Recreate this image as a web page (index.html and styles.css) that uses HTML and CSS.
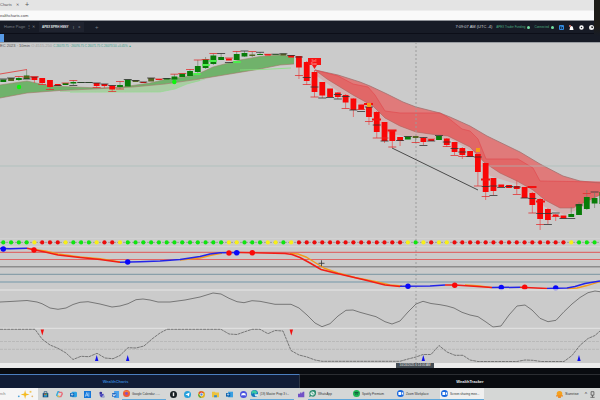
FILE: index.html
```html
<!DOCTYPE html>
<html lang="en">
<head>
    <meta charset="UTF-8">
    <meta name="viewport" content="width=device-width, initial-scale=1.0">
    <title>WealthCharts</title>
    <link rel="stylesheet" href="styles.css">
</head>
<body>
    <div class="browser-tabs">
        <span class="browser-title">Charts</span>
        <button type="button" class="browser-close" aria-label="Close tab">✕</button>
        <button type="button" class="browser-new" aria-label="New tab">+</button>
    </div>
    <div class="address-bar">
        <input type="text" aria-label="Address" value="ealthcharts.com">
    </div>

    <header class="nav">
        <button type="button" class="page-tab">Home Page <span>⋮</span> <span>✕</span></button>
        <button type="button" class="page-tab active">APEX EPRH HSNY <span>⋮</span> <span>✕</span></button>
        <button type="button" class="add-tab" aria-label="Add page">+</button>
        <div class="status">
            <span class="clock">7:09:07 AM (UTC -4)</span>
            <span class="online">APEX Trader Funding <i></i></span>
            <span class="online">Connected <i></i></span>
            <button type="button" class="nav-icon" aria-label="Layout">
                <svg viewBox="0 0 10 10"><rect width="10" height="10" rx="2" fill="#3189df"/><path d="M2 3h3v5H2zM6 4h2v4H6z" fill="#163252"/></svg>
            </button>
            <button type="button" class="nav-icon" aria-label="Alerts">
                <svg viewBox="0 0 10 10"><path d="M1 10L2 5Q2 2 5 2T8 5L9 10z" fill="#fff"/><circle cx="2" cy="2" r="2" fill="#e57c72"/></svg>
            </button>
            <button type="button" class="nav-icon" aria-label="Settings">
                <svg viewBox="0 0 10 10"><circle cx="5" cy="5" r="3" fill="none" stroke="#fff" stroke-width="3"/></svg>
            </button>
            <button type="button" class="nav-icon" aria-label="Account">
                <svg viewBox="0 0 10 10"><circle cx="5" cy="5" r="5" fill="#eee"/><path d="M4 3h4v3H5z" fill="#333"/></svg>
            </button>
        </div>
    </header>
    <div class="toolbar"><button type="button" aria-label="Menu"></button></div>

    <main class="chart">
        <div class="legend">EC 2023 · 10min <span>O 4515.250</span> <b>C 26073.75 · 26076.75 C 26071.75 C 26073.50 +0.45% ▲</b></div>
        <svg id="chart" viewBox="0 42 600 321" role="img" aria-label="Price chart"></svg>
    </main>
    <div class="time-axis"><span>10/24/2025 6:14:00 AM</span></div>

    <nav class="views">
        <button type="button" class="active">WealthCharts</button>
        <button type="button">WealthTracker</button>
    </nav>

    <footer class="taskbar">
        <div class="search"><span>rch</span>
            <svg viewBox="0 0 20 10"><path d="M9 0l1 4 4 1-4 1-1 4-1-4-4-1 4-1z" fill="#f4ba20"/><circle cx="2" cy="7" r="1" fill="#4ca0d8"/><path d="M14 1h2v2h-2z" fill="#f2c65a"/><circle cx="17" cy="7" r="1" fill="#e6b770"/></svg>
        </div>
        <button type="button" class="app" aria-label="Store"><svg viewBox="0 0 10 10"><path d="M1 3h8v6H1z" fill="#18507c"/><path d="M3 3V1h4v2" fill="none" stroke="#18507c"/><path d="M3 4h2v2H3z" fill="#e55e36"/><path d="M5 4h2v2H5z" fill="#73b640"/><path d="M3 6h4v2H3z" fill="#36aae4"/></svg></button>
        <button type="button" class="app" aria-label="Copilot"><svg viewBox="0 0 10 10"><path d="M5 1H3L1 6l2 2h2" fill="none" stroke="#33aadd" stroke-width="2"/><path d="M4 2h4l1 2-2 4H4" fill="none" stroke="#e76f7c" stroke-width="2"/><path d="M2 7l3 1" stroke="#edbd3c" stroke-width="2"/></svg></button>
        <button type="button" class="app" aria-label="Mail"><svg viewBox="0 0 10 10"><rect x="2" y="1" width="8" height="8" rx="2" fill="#2aa2e5"/><rect y="3" width="6" height="5" fill="#1264b6"/><circle cx="3" cy="5" r="1" fill="none" stroke="#fff"/></svg></button>
        <button type="button" class="app" aria-label="Tasks"><svg viewBox="0 0 10 10"><rect width="10" height="10" fill="#1476d9"/><path d="M2 8l2-6 2 6M2 6h4M7 2v6" fill="none" stroke="#b9dcfc"/></svg></button>
        <button type="button" class="app" aria-label="Teams"><svg viewBox="0 0 10 10"><circle cx="4" cy="3" r="2" fill="#3934a0"/><path d="M2 5l6-1v5H4z" fill="#4845bd"/><circle cx="8" cy="8" r="2" fill="#a1a7cc"/></svg></button>
        <button type="button" class="app" aria-label="Word"><svg viewBox="0 0 10 10"><path d="M3 0h7v10H3z" fill="#4da2eb"/><path d="M0 3h6v5H0z" fill="#155dbb"/><path d="M1 4l1 3 1-2 1 2 1-3" fill="none" stroke="#fff"/></svg></button>
        <button type="button" class="window"><svg viewBox="0 0 10 10"><circle cx="5" cy="5" r="5" fill="#f05a34"/><path d="M1 1q2 2 5 1t3 4L8 3z" fill="#ffc036"/><circle cx="5" cy="5" r="2" fill="#8653c4"/></svg><span>Google Calendar - ...</span></button>
        <button type="button" class="app" aria-label="Music"><svg viewBox="0 0 10 10"><circle cx="5" cy="5" r="5" fill="#182023"/><path d="M4 2h2v4L5 8 4 6z" fill="#eee"/></svg></button>
        <button type="button" class="app" aria-label="Telegram"><svg viewBox="0 0 10 10"><circle cx="5" cy="5" r="5" fill="#25a0dc"/><path d="M2 5l6-3-1 6-2-2z" fill="#fff"/></svg></button>
        <button type="button" class="app" aria-label="Chrome"><svg viewBox="0 0 10 10"><circle cx="5" cy="5" r="5" fill="#e1b322"/><path d="M1 2q4-4 8 1H5L3 6z" fill="#e44939"/><path d="M0 4l3 3 2 3Q0 9 0 4" fill="#35a851"/><circle cx="5" cy="5" r="2" fill="#4387ed" stroke="#fff"/></svg></button>
        <button type="button" class="app" aria-label="Files"><svg viewBox="0 0 10 10"><path d="M0 1h4l1 1h5v7H0z" fill="#edc23c"/><path d="M3 6h4v3H3z" fill="#378acb"/></svg></button>
        <button type="button" class="app" aria-label="Outlook"><svg viewBox="0 0 10 10"><path d="M3 1h7v8H3z" fill="#39a0e2"/><path d="M0 3h6v5H0z" fill="#075eab"/><circle cx="3" cy="5" r="1" fill="none" stroke="#fff"/></svg></button>
        <button type="button" class="app" aria-label="Discord"><svg viewBox="0 0 10 10"><circle cx="5" cy="5" r="5" fill="#4951df"/><path d="M2 4q3-2 6 0v3L7 6H3L2 7z" fill="#fff"/></svg></button>
        <button type="button" class="window"><svg viewBox="0 0 10 10"><circle cx="5" cy="5" r="5" fill="#1676bd"/><path d="M1 2q6-4 8 2L6 6 4 4 1 6z" fill="#3ccba3"/><path d="M5 6h5v3H6z" fill="#d9eff5"/></svg><span>(19) Master Prop 3 t...</span></button>
        <button type="button" class="app" aria-label="Community"><svg viewBox="0 0 10 10"><path d="M0 4h3V2h2v2l2-3h2v8H0z" fill="#7151c6"/></svg></button>
        <button type="button" class="window"><svg viewBox="0 0 10 10"><path d="M0 10l1-3Q-1 1 5 0t5 5-7 4z" fill="#2b8b6e"/><circle cx="5" cy="5" r="3" fill="#e2f2ec"/><path d="M4 3q0 3 3 3" fill="none" stroke="#2b8b6e"/></svg><span>WhatsApp</span></button>
        <button type="button" class="window"><svg viewBox="0 0 10 10"><circle cx="5" cy="5" r="5" fill="#1eb653"/><path d="M2 4q3-1 6 0M3 6q2-1 4 0" fill="none" stroke="#123"/></svg><span>Spotify Premium</span></button>
        <button type="button" class="window"><svg viewBox="0 0 10 10"><circle cx="5" cy="5" r="5" fill="#1767de"/><path d="M2 3h4v4H2zM7 4l2-1v4L7 6z" fill="#fff"/></svg><span>Zoom Workplace</span></button>
        <button type="button" class="window current"><svg viewBox="0 0 10 10"><circle cx="5" cy="5" r="5" fill="#1767de"/><path d="M2 3h4v4H2zM7 4l2-1v4L7 6z" fill="#fff"/></svg><span>Screen sharing mee...</span></button>
        <div class="tray">
            <svg viewBox="0 0 10 10"><circle cx="5" cy="4" r="4" fill="#f6a11c"/><path d="M0 6h10v2H0zM3 8h4v2H3z" fill="#ed8c26"/></svg>
            <span>Sunrise</span>
            <span class="caret">^</span>
            <svg class="mic" viewBox="0 0 10 10"><path d="M3 1h4v5H3zM5 6v3M2 9h6" fill="none" stroke="#444"/></svg>
        </div>
    </footer>
    <div class="bezel"></div>

    <script src="script.js"></script>
</body>
</html>
```

FILE: styles.css
```css
* {
    box-sizing: border-box;
}

body {
    margin: 0;
    min-height: 100vh;
    position: relative;
    display: flex;
    flex-direction: column;
    overflow-x: hidden;
    background: #090b10;
    font-family: "Liberation Sans", Arial, sans-serif;
    font-size: 4px;
    line-height: 6px;
}

button,
input {
    border: 0;
    padding: 0;
    background: none;
    font: inherit;
    color: inherit;
}

.browser-tabs {
    display: flex;
    align-items: center;
    gap: 6px;
    height: 10px;
    background: #e4e4e4;
    color: #555;
}

.browser-title {
    width: 10px;
    white-space: nowrap;
}

.browser-new {
    font-size: 7px;
}

.address-bar {
    display: flex;
    height: 11px;
    background: #fafafa;
    border-top: 1px solid #eee;
    border-bottom: 1px solid #909399;
}

.address-bar input {
    width: 100%;
    font-size: 4px;
    color: #444;
}

.nav {
    display: flex;
    align-items: center;
    height: 13px;
    padding-left: 4px;
    background: #171b26;
    border-bottom: 1px solid #0c0e18;
    color: #777c84;
}

.page-tab {
    display: flex;
    justify-content: space-between;
    align-items: center;
    width: 31px;
    height: 10px;
    margin-right: 4px;
    white-space: nowrap;
}

.page-tab.active {
    width: 45px;
    padding: 0 3px;
    background: #1f232f;
    font-size: 3px;
    font-weight: bold;
    color: #e4e7e9;
}

.page-tab span {
    color: #858990;
}

.add-tab {
    margin-left: 7px;
    font-size: 6px;
}

.status {
    display: flex;
    align-items: center;
    gap: 4px;
    margin-left: auto;
    padding-right: 6px;
    white-space: nowrap;
}

.clock {
    color: #d4d7dd;
    font-size: 4px;
}

.online {
    display: flex;
    align-items: center;
    gap: 2px;
    color: #4cac80;
    font-size: 3px;
}

.online i {
    width: 3px;
    height: 3px;
    border-radius: 50%;
    background: #73dfa2;
}

.nav-icon {
    width: 5px;
    height: 5px;
    margin-left: 1px;
}

.nav-icon svg {
    display: block;
}

.toolbar {
    display: flex;
    height: 8px;
    background: #171b26;
}

.toolbar button {
    width: 4px;
    background: #5799e5;
}

.chart {
    position: relative;
    background: #cbcbcb;
    border-top: 1px solid #999ca1;
}

.chart svg {
    display: block;
    width: 100%;
    margin-top: -1px;
}

.legend {
    position: absolute;
    left: 0;
    top: 0;
    font-size: 4px;
    line-height: 5px;
    color: #555;
    white-space: nowrap;
}

.legend span {
    color: #999;
}

.legend b {
    font-weight: normal;
    font-size: 3px;
    color: #379e8d;
}

.time-axis {
    position: relative;
    height: 5px;
    background: #ececec;
}

.time-axis span {
    position: absolute;
    left: 66%;
    top: 0;
    width: 38px;
    background: #454d54;
    color: #eee;
    font-size: 3px;
    line-height: 5px;
    text-align: center;
    white-space: nowrap;
}

.views {
    display: grid;
    grid-template-columns: 1fr 1fr;
    flex: 1;
    padding-top: 6px;
    background: #090b10;
}

.views button {
    border-top: 1px solid #2b2d32;
    color: #e7e9ec;
    font-weight: bold;
    padding-left: 40px;
}

.views .active {
    border-top: 1px solid #4b7ebf;
    border-right: 1px solid #2d3542;
    background: #111c35;
    color: #347ece;
    padding-left: 0;
    padding-right: 68px;
}

.taskbar {
    display: flex;
    align-items: center;
    height: 12px;
    background: #d5d7d6;
    color: #333;
    white-space: nowrap;
}

.taskbar svg {
    width: 7px;
    height: 7px;
    flex: none;
}

.search {
    display: flex;
    align-items: center;
    justify-content: space-between;
    width: 38px;
    height: 12px;
    padding-right: 3px;
    background: #f5f5f5;
    color: #777;
}

.taskbar .search svg {
    width: 18px;
    height: 9px;
}

.app {
    display: flex;
    align-items: center;
    justify-content: center;
    width: 14px;
    height: 12px;
}

.window {
    display: flex;
    align-items: center;
    gap: 2px;
    width: 44px;
    height: 12px;
    padding: 0 1px;
    border-bottom: 1px solid #60a8db;
}

.window span {
    font-size: 3px;
}

.window.current {
    background: #efefef;
}

.tray {
    display: flex;
    align-items: center;
    gap: 2px;
    margin-left: auto;
    padding-right: 4px;
}

.tray .caret {
    margin-left: 4px;
    font-size: 5px;
}

.bezel {
    position: absolute;
    top: 0;
    right: 0;
    width: 6px;
    height: 36px;
    background: linear-gradient(#1d1c18 70%, #171b26);
}

.flag {
    font-size: 3px;
    fill: #ffb0a8;
}
```

FILE: script.js
```js
const chart = document.getElementById('chart');
const STEP = 7.78;
const barX = i => 3.3 + i * STEP;

function draw(tag, attrs, text) {
    const el = document.createElementNS('http://www.w3.org/2000/svg', tag);
    for (const key in attrs) {
        el.setAttribute(key, attrs[key]);
    }
    if (text) el.textContent = text;
    chart.appendChild(el);
}

function line(points, stroke, width = 1, extra = {}) {
    draw('polyline', { points, stroke, fill: 'none', 'stroke-width': width, ...extra });
}

function area(points, fill, opacity = 1) {
    draw('polygon', { points, fill, opacity });
}

function level(y, stroke, width = 1, extra = {}) {
    line(`0,${y} 600,${y}`, stroke, width, extra);
}

// Trend clouds
const greenTop = '0,85 27,81 50,86 100,88 122,87 150,83 167,79 185,77 200,73 213,67 240,60 260,56.5 280,55 294,57';
const greenBottom = '294,64 280,65 260,69 230,74 200,79 165,84 133,87 93,89 60,90.5 27,93 0,98';
area('60,91 93,89 133,87 165,84 200,79 200,81 187,84 175,89 160,92 60,92', '#a9cda3');
area(`${greenTop} ${greenBottom}`, '#70b26b');
line(greenTop, '#98856a', 0.6);
line(greenBottom, '#a57667', 0.6);
line('70,92.3 160,92 175,89 187,84 205,79', '#8fdd8b', 0.6);
line('240,70 262,69.5 291,68', '#85e37f', 0.8);

const redTop = '315,70 338,75 360,82 370,86 387,94 403,102 416,107 440,113 450,117 470,126 487,136 520,152 540,164 563,176 580,181 600,183';
const redBottom = '600,195 585,202 573,208 560,208 545,200 533,190 517,181 500,173 485,163 470,147 448,136 430,134 416,132 400,126 385,118 373,106 353,95 340,87 327,79 315,70';
const redMid = '315,70 338,76 353,84 368,87 375,95 385,111 400,113 440,113 447,117 462,129 470,131 478,139 486,159 518,159 533,168 540,181 600,182';
area(`${redBottom} 317,76 340,93 370,110 385,133 410,137 450,139 478,155 490,176 520,185 545,207 565,215 585,206`, '#d5aaaa', 0.8);
area(`${redTop} ${redBottom}`, '#e07a7a');
area(`${redMid} ${redBottom}`, '#e16767');
line(redTop, '#a2706e', 0.8);
line(redBottom, '#ad6662', 0.6);
line(redMid, '#e14c50', 0.7);

// Crosshair
level(166, '#a7bdb9', 0.7);
line('416,42 416,363', '#9b9b9b', 1, { 'stroke-dasharray': '2 2' });

line('0,74 27,69.5', '#df4545', 0.9);
line('392,148 478,190', '#3c3c3c', 0.9);

// Candles: body top, body bottom, colour, wick top, wick bottom
const bars = [
    [79.5, 82, 'g'], [78, 81, 'o'], [78, 80, 'g', 76, 81], [75.5, 79, 'g', 70, 79], [77, 80, 'r', 77, 83],
    [78, 83, 'r', 78, 85], [80, 87, 'r', 80, 90], [84, 86, 'r'], [83, 85, 'g'], [82, 83.5, 'g', 80, 85],
    [82, 83, 'g'], [82, 83, 'g'], [83, 86, 'r', 83, 88], [84, 86, 'r', 84, 88], [85.5, 89.5, 'r', 85, 91.5],
    [85, 87, 'g', 81, 89], [79.5, 86.5, 'g'], [80, 82, 'o'], [82, 83, 'r'], [78, 81.5, 'o'],
    [79, 80, 'r'], [78, 79.5, 'g'], [76.5, 79.5, 'g', 74, 82], [73.5, 77, 'g'], [71, 76, 'g', 69, 76], [66, 72, 'g', 60, 73],
    [59, 68, 'g', 57, 69], [55.5, 64, 'g', 53.5, 65], [57, 60, 'g', 53.5, 60], [58.5, 60.5, 'r'], [54, 60, 'g', 51, 60],
    [53, 56.5, 'g', 51, 57], [54.5, 56, 'o', 51.5, 57], [54, 55, 'g', 52, 55], [54, 55.5, 'r'], [54.3, 55, 'g'],
    [53.5, 55.5, 'o'], [55, 57.5, 'r'], [56, 67.5, 'r', 56, 79], [62, 81, 'r', 61, 85], [72, 92, 'r', 70, 97],
    [82, 95.5, 'r', 82, 98], [88.5, 97, 'r'], [92.5, 97, 'r', 92, 99], [95, 102.5, 'r', 94, 108.5],
    [98.5, 110, 'r', 98, 117], [104.5, 110, 'r'], [107, 117, 'r', 107, 125], [112, 132, 'r', 111, 138],
    [122, 141, 'r', 122, 143], [130, 141, 'r', 130, 148], [137, 141, 'r', 137, 146], [136.5, 139.5, 'g'],
    [136, 138, 'o', 136, 143], [138, 142, 'r', 137, 145], [139, 141, 'r'], [136, 140, 'g'],
    [138.5, 145, 'r', 138, 147], [142, 152, 'r', 142, 155], [148, 155, 'r', 147, 159], [151, 157, 'r'],
    [154, 172, 'r', 154, 186], [163, 192, 'r', 163, 200], [178, 191, 'r', 178, 195], [184.5, 187, 'r'],
    [185, 188, 'r'], [186, 189, 'r', 180, 194], [187, 198, 'r'], [193, 205, 'r', 192, 213],
    [199, 219, 'r', 198, 230], [209, 220, 'r', 208, 224], [214.5, 217, 'r', 214, 221], [215.5, 218.5, 'r'],
    [214, 217, 'g', 207, 217], [204, 215, 'g', 202, 215], [197, 209, 'g', 190, 210], [198, 203.5, 'g', 193, 208], [192, 204, 'g']
];
const fills = { g: '#087c08', r: '#f90606', o: '#556523' };

bars.forEach(([top, bottom, color, high, low], i) => {
    const x = barX(i);
    if (high) line(`${x},${high} ${x},${low}`, color === 'r' ? '#e94b4b' : '#72856b', 0.7);
    draw('rect', { x: x - 2.9, y: top, width: 5.8, height: bottom - top, fill: fills[color] });
});

// Range marks: bar, y, colour
const marks = [
    [0, 79, 'k'], [1, 78, 'k'], [2, 76.5, 'r'], [3, 77, 'r'], [3, 79, 'k'], [4, 77, 'k'], [4, 76.5, 'r'], [5, 84.5, 'r'],
    [6, 89.5, 'r'], [7, 85.5, 'k'], [8, 83, 'r'], [9, 80.5, 'r'], [9, 85.5, 'k'], [10, 82.5, 'k'], [11, 82.5, 'k'],
    [12, 83, 'k'], [12, 87.5, 'r'], [13, 84, 'k'], [14, 85.5, 'k'], [14, 91.5, 'r'], [15, 81.5, 'r'], [15, 89, 'r'],
    [16, 79.5, 'k'], [17, 80.5, 'k'], [18, 82, 'k'], [19, 78, 'k'], [20, 79, 'r'], [21, 78.5, 'k'], [22, 74.2, 'r'], [23, 73.5, 'r'],
    [24, 69.5, 'r'], [25, 60, 'r'], [26, 59.5, 'r'], [27, 53.5, 'r'], [28, 53.5, 'k'], [29, 58, 'r'], [29, 62.5, 'k'],
    [30, 51.5, 'r'], [31, 51, 'k'], [32, 51.5, 'r'], [33, 52.3, 'k'], [34, 54.3, 'r'], [35, 54.2, 'k'], [36, 53.8, 'k'], [37, 55.5, 'k'],
    [38, 57, 'k'], [38, 75.5, 'r'], [39, 77.5, 'k'], [39, 84.5, 'r'], [40, 87, 'k'], [40, 97, 'r'],
    [41, 98, 'k'], [42, 97.5, 'k'], [43, 99, 'k'], [43, 94.5, 'k'], [44, 96.5, 'k'], [44, 108.5, 'r'], [45, 110, 'k'],
    [46, 111.5, 'k'], [46, 109.5, 'r'], [47, 107, 'k'], [47, 121.5, 'r'], [48, 125, 'k'], [48, 138, 'r'], [49, 138, 'r'],
    [49, 141, 'k'], [50, 147, 'r'], [51, 140.5, 'k'], [52, 136.5, 'k'], [53, 142.5, 'r'], [54, 137.5, 'k'], [54, 145.5, 'k'],
    [55, 141, 'k'], [55, 139, 'r'], [56, 135.5, 'k'], [57, 142, 'k'], [57, 146.5, 'r'], [58, 148.5, 'k'], [58, 155.5, 'r'],
    [59, 152, 'k'], [59, 156.5, 'r'], [60, 156.5, 'k'], [61, 157, 'k'], [61, 186, 'r'], [62, 186.5, 'k'], [62, 196.5, 'r'],
    [63, 186, 'k'], [63, 195.5, 'k'], [64, 187.5, 'k'], [65, 186.5, 'k'], [66, 187, 'k'], [66, 194.5, 'r'], [67, 198, 'k'],
    [68, 198.5, 'k'], [68, 213, 'r'], [69, 213.5, 'k'], [69, 224.5, 'r'], [70, 213.5, 'k'], [70, 224.5, 'k'],
    [71, 213, 'k'], [71, 216.5, 'r'], [72, 218.5, 'k'], [73, 218.5, 'k'], [74, 205, 'k'], [75, 193.5, 'r'], [76, 192, 'k']
];
marks.forEach(([i, y, color]) => {
    line(`${barX(i) - 4},${y} ${barX(i) + 4},${y}`, color === 'k' ? '#333' : '#e13131', 0.8);
});

// Thick red stop levels
[[368.5, 104], [376.5, 119.5], [392, 130.5], [485.5, 179.5], [532, 187], [540.5, 201.5]].forEach(([x, y]) => {
    draw('rect', { x: x - 4.5, y: y - 1, width: 9, height: 2, fill: '#f41010' });
});
// Signals
[[19, 87], [174.3, 82]].forEach(([cx, cy]) => draw('circle', { cx, cy, r: 2.2, fill: '#0bf70b' }));
[[197, 74], [206, 65], [213, 61], [237, 62]].forEach(([x, y]) => {
    draw('rect', { x: x - 4, y: y - 1, width: 8, height: 2, rx: 1, fill: '#4cef4c' });
});
draw('rect', { x: 367, y: 103, width: 4, height: 4, fill: '#f79b16' });
draw('rect', { x: 476, y: 148, width: 4, height: 4, fill: '#f79b16' });
draw('path', { d: 'M308 58h13v7h-4l-2.5 4-2.5-4h-4z', fill: '#f61313' });
draw('text', { x: 311.5, y: 61.5, class: 'flag' }, 'Sell');
draw('text', { x: 311, y: 64.5, class: 'flag' }, 'Now');

// Trend dots
level(238.5, '#d6d6d6', 0.7);
level(242.4, '#8d8d8d', 0.7, { 'stroke-dasharray': '2 1' });
level(246.7, '#dadada', 0.8);
const trend = 'ggggyrrrygggyrrygggggggggg' + 'gggyygggyygy' + 'r'.repeat(14) + 'ygyryy' + 'r'.repeat(15) + 'yggg';
const dotFills = { g: '#0fe50f', y: '#f7ef18', r: '#ec0b0b' };
[...trend].forEach((c, i) => {
    draw('circle', { cx: barX(i), cy: 242.4, r: 2.1, fill: dotFills[c] });
});

// Moving averages
level(252.3, '#df5555');
level(259.5, '#e06565');
level(266.8, '#8d8d8d', 1.5);
level(274.3, '#7894a1');
level(282, '#91a9b4', 1.4);
line('30,249 45,250.8 58,254 80,256.8 100,258.7 120,261.8', '#f39a1c', 1.3);
line('180,260 200,258 212,255 222,253.3', '#f39a1c', 1.3);
line('290,253.4 298,254 306,257 315,262.5 325,268.5 338,273 355,277.5 375,281.5 390,285 402,286', '#f39a1c', 1.4);
line('465,285 480,286 492,287.7', '#f39a1c', 1.3);
line('567,288.8 577,288 587,285.5 600,281.5', '#f39a1c', 1.3);
const blue = '#2424e7';
const red = '#f11d17';
line('0,248.5 10,248.7 27,248.3', blue, 1.5);
line('27,248.3 35,250 45,252 58,255 80,257.5 100,259.5 120,262.3', red, 1.5);
line('120,262.3 140,261.7 160,261 180,259.5 200,256.5 210,254 220,252.7 240,252.6', blue, 1.5);
line('240,252.6 252,252.8 285,253.5 292,254.5 300,257.5 310,263 321,269.5 335,273 350,276.5 365,280 385,285 400,286.5', red, 1.5);
line('400,286.3 430,286 445,285', blue, 1.5);
line('445,285 455,285 470,286 492,287.5', red, 1.5);
line('492,287.5 520,287.3', blue, 1.5);
line('520,287.3 547,288.5', red, 1.5);
line('547,288.5 567,288 575,286.5 585,283.5 600,281', blue, 1.5);
[[3.3, 249], [127.7, 262], [236.7, 252.8], [408, 286.3], [501.3, 287.5], [555.7, 288]].forEach(([cx, cy]) => {
    draw('circle', { cx, cy, r: 2.7, fill: '#0808fa' });
});
[[34, 250], [229, 253], [252.3, 252.8], [454.7, 285.3], [524.7, 287.3]].forEach(([cx, cy]) => {
    draw('circle', { cx, cy, r: 2.7, fill: '#fa0808' });
});
draw('path', { d: 'M318.5 263.3h6M321.5 260.3v6', stroke: '#333', 'stroke-width': 0.8 });

// Momentum
level(290, '#dedede', 1.4);
line('0,302 10,301.5 27,300.5 37,302 42,303.7 50,308 58,309.3 66,308 73,304.5 80,302.3 88,301.7 100,304 112,307 120,306 128,303.7 136,299.7 143,299 150,300 158,302 170,302 185,300 200,297 213,293 221,294 229,298.3 237,301.7 244,302.7 252,300.7 260,301.3 275,304.3 291,304.3 299,308 307,315 315,323 322,326.7 330,323.7 338,316 346,310.3 353,310 360,312.3 376,316.7 385,321.7 392,324 400,321 408,312 416,304 423,301.3 431,303.5 440,304.7 447,306 454,308 462,312.3 470,315 478,316.7 486,322 493,327 501,326 509,315 517,306 525,305 532,310 540,318.3 548,321.7 556,320.3 564,311.7 572,304 580,297.5 588,292.7 595,291 600,291.7', '#6d6d6d', 0.9);

// Oscillator
level(328.3, '#e4e4e4');
level(341.5, '#b4b4b4', 0.8, { 'stroke-dasharray': '3 1' });
level(349.3, '#b4b4b4', 0.8, { 'stroke-dasharray': '3 1' });
line('0,329.3 35,329.3 42,339 50,345 58,348.3 66,353 73,359.5 81,356.3 89,356.7 97,353.3 105,358 113,358.7 120,355.5 128,347.7 136,348 144,346 152,339 160,333 167,329.3 221,329.3 229,334 237,334.5 244,332 252,329.3 260,329.3 268,333.7 275,330.5 283,331 291,350.5 299,355 307,357 315,360 322,361.3 400,361.3 408,359 416,357 423,354.5 431,354.5 439,345.5 447,352 455,355.3 463,355.3 470,360 478,361.5 517,361.5 525,360 533,360.3 541,361.5 564,361.5 572,355.5 580,345.3 588,338.5 595,335.5 600,331', '#6d6d6d', 0.9, { 'stroke-dasharray': '3 0.6' });
[42.3, 291.3].forEach(x => area(`${x - 1.7},329.5 ${x + 1.7},329.5 ${x},335.5`, '#f10e0e'));
[96.7, 127.7, 423.3, 579].forEach(x => area(`${x - 1.7},361 ${x + 1.7},361 ${x},355`, '#1010ed'));
```
